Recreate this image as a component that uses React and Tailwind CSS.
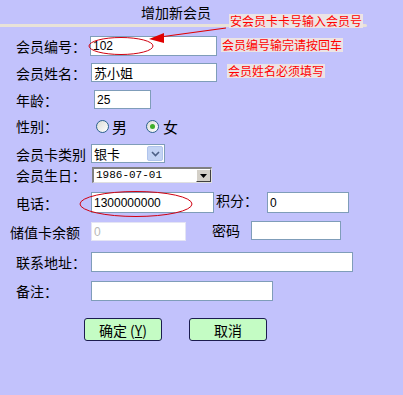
import React from 'react';

const baseInput = 'h-full bg-white border px-[2px] text-[12px] leading-none outline-none font-["Liberation_Sans","Noto_Sans_CJK_SC",sans-serif]';
const inputCls = `${baseInput} border-[#7f9db9] text-black`;

const Radio = ({ checked }) => (
  <span className="w-[13px] h-[13px] rounded-full border border-[#2c628b] bg-gradient-to-br from-[#dcdcd6] to-white flex items-center justify-center">
    {checked && <span className="w-[5px] h-[5px] rounded-full bg-[#3fae2a]" />}
  </span>
);

export default function App() {
  return (
    <div className="relative w-[403px] h-[395px] bg-[#c2c2fc] text-black font-['Noto_Sans_CJK_SC',sans-serif] overflow-hidden">
      {/* title */}
      <div className="h-[24px] pl-[141px] flex items-center text-[14px] leading-none">增加新会员</div>
      <div className="h-[3px] w-[367px] bg-[#e8e2d8] rounded-r-full" />

      {/* 会员编号 */}
      <div className="flex items-center h-[20px] mt-[9px] pl-[16px] text-[14px] leading-none">
        <span className="w-[74px] shrink-0">会员编号：</span>
        <input readOnly defaultValue="102" className={`${inputCls} w-[127px]`} />
      </div>

      {/* 会员姓名 */}
      <div className="flex items-center h-[19px] mt-[7px] pl-[16px] text-[14px] leading-none">
        <span className="w-[75px] shrink-0">会员姓名：</span>
        <input readOnly defaultValue="苏小姐" className={`${inputCls} w-[126px] text-[13px]`} />
      </div>

      {/* 年龄 */}
      <div className="flex items-center h-[19px] mt-[8px] pl-[16px] text-[14px] leading-none">
        <span className="w-[78px] shrink-0">年龄：</span>
        <input readOnly defaultValue="25" className={`${inputCls} w-[57px]`} />
      </div>

      {/* 性别 */}
      <div className="flex items-center h-[20px] mt-[7px] pl-[16px] text-[14px] leading-none">
        <span className="w-[80px] shrink-0">性别：</span>
        <Radio />
        <span className="ml-[3px] text-[15px]">男</span>
        <span className="ml-[19px]"><Radio checked /></span>
        <span className="ml-[4px] text-[15px]">女</span>
      </div>

      {/* 会员卡类别 */}
      <div className="flex items-center h-[19px] mt-[8px] pl-[16px] text-[14px] leading-none">
        <span className="w-[75px] shrink-0">会员卡类别</span>
        <div className="w-[74px] h-full bg-white border border-[#7f9db9] flex items-center justify-between pl-[2px] pr-[1px]">
          <span className="text-[13px]">银卡</span>
          <span className="w-[16px] h-[15px] rounded-[2px] bg-[#c4d4f4] border border-[#b0c4ec] flex items-center justify-center">
            <svg width="9" height="6" viewBox="0 0 9 6">
              <path d="M1 1 L4.5 4.5 L8 1" fill="none" stroke="#4d6185" strokeWidth="1.6" />
            </svg>
          </span>
        </div>
      </div>

      {/* 会员生日 */}
      <div className="flex items-center h-[16px] mt-[4px] pl-[16px] text-[14px] leading-none">
        <span className="w-[76px] shrink-0">会员生日：</span>
        <div className="w-[120px] h-full bg-white border-t-2 border-l-2 border-t-[#808080] border-l-[#808080] border-b border-r border-b-[#e0e0e0] border-r-[#e0e0e0] flex items-center justify-between pl-[2px]">
          <span className="text-[11px] font-['Liberation_Mono',monospace]">1986-07-01</span>
          <span className="w-[15px] h-[13px] bg-[#d4d0c8] border-t border-l border-t-white border-l-white border-b border-r border-b-[#404040] border-r-[#404040] flex items-center justify-center">
            <svg width="7" height="4" viewBox="0 0 7 4"><path d="M0 0 H7 L3.5 4 Z" fill="#000" /></svg>
          </span>
        </div>
      </div>

      {/* 电话 / 积分 */}
      <div className="flex items-start h-[21px] mt-[9px] pl-[16px] text-[14px] leading-none">
        <span className="w-[75px] shrink-0 mt-[4px]">电话：</span>
        <input readOnly defaultValue="1300000000" className={`${inputCls} w-[123px] h-[20px]`} />
        <span className="ml-[2px] w-[51px] shrink-0 mt-[1px]">积分：</span>
        <input readOnly defaultValue="0" className={`${inputCls} w-[82px] h-[18px]`} />
      </div>

      {/* 储值卡余额 / 密码 */}
      <div className="flex items-center h-[19px] mt-[9px] pl-[10px] text-[14px] leading-none">
        <span className="w-[81px] shrink-0">储值卡余额</span>
        <input readOnly defaultValue="0" className={`${baseInput} w-[95px] border-[#e4e4f4] text-[#b8b8b8]`} />
        <span className="ml-[26px] w-[39px] shrink-0 -mt-[3px]">密码</span>
        <input readOnly className={`${inputCls} w-[90px] -mt-[3px]`} />
      </div>

      {/* 联系地址 */}
      <div className="flex items-center h-[20px] mt-[11px] pl-[16px] text-[14px] leading-none">
        <span className="w-[75px] shrink-0">联系地址：</span>
        <input readOnly className={`${inputCls} w-[262px]`} />
      </div>

      {/* 备注 */}
      <div className="flex items-center h-[20px] mt-[9px] pl-[16px] text-[14px] leading-none">
        <span className="w-[75px] shrink-0">备注：</span>
        <input readOnly className={`${inputCls} w-[182px]`} />
      </div>

      {/* buttons */}
      <div className="flex h-[23px] mt-[17px] pl-[84px] gap-[27px] text-[14px] leading-none">
        <button className="w-[78px] h-full bg-[#c4fcc4] border border-[#1c1c50] rounded-[3px] flex items-center justify-center">
          确定 (<span className="underline">Y</span>)
        </button>
        <button className="w-[78px] h-full bg-[#c4fcc4] border border-[#1c1c50] rounded-[3px] flex items-center justify-center">
          取消
        </button>
      </div>

      {/* annotations */}
      <span className="absolute left-[229px] top-[14px] px-[1px] bg-[#ece4e4] text-[12px] leading-[14px] text-[#ff0000]">安会员卡卡号输入会员号</span>
      <span className="absolute left-[221px] top-[38px] px-[1px] bg-[#ece4e4] text-[12px] leading-[14px] text-[#ff0000]">会员编号输完请按回车</span>
      <span className="absolute left-[227px] top-[64px] px-[1px] bg-[#ece4e4] text-[12px] leading-[14px] text-[#ff0000]">会员姓名必须填写</span>

      <svg className="absolute inset-0 pointer-events-none" width="403" height="395" viewBox="0 0 403 395">
        <line x1="226" y1="28" x2="160" y2="37" stroke="#e00000" strokeWidth="1.2" />
        <path d="M149 39 L164 33 L164 43 Z" fill="#e00000" />
        <ellipse cx="121" cy="46" rx="32" ry="8.5" fill="none" stroke="#d00010" strokeWidth="1" />
        <ellipse cx="136" cy="204" rx="56" ry="12.5" fill="none" stroke="#d00010" strokeWidth="1" />
      </svg>
    </div>
  );
}
